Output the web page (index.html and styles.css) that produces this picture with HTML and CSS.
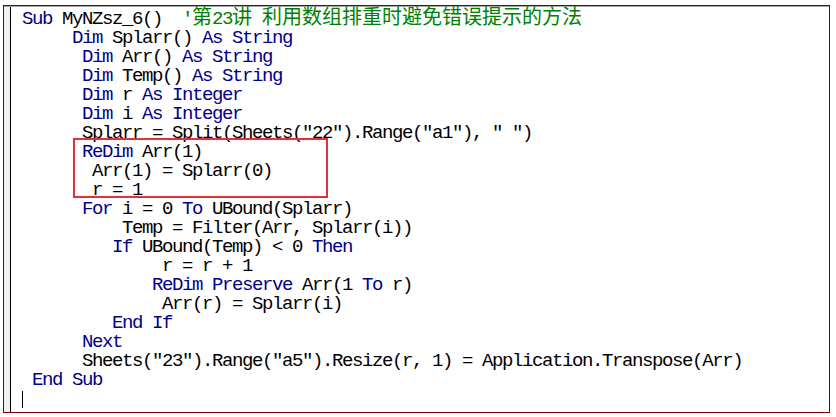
FILE: index.html
```html
<!DOCTYPE html>
<html lang="zh">
<head>
<meta charset="utf-8">
<link rel="stylesheet" href="styles.css">
</head>
<body>
<div class="frame">
  <div class="inner">
    <div class="gutter"></div>
    <div class="code">
      <div class="ln"><span class="kw">Sub</span> MyNZsz_6()  <span class="cm">'<span class="cjk">第</span>23<span class="cjk">讲</span> <span class="cjk">利用数组排重时避免错误提示的方法</span></span></div>
      <div class="ln">     <span class="kw">Dim</span> Splarr() <span class="kw">As</span> <span class="kw">String</span></div>
      <div class="ln">      <span class="kw">Dim</span> Arr() <span class="kw">As</span> <span class="kw">String</span></div>
      <div class="ln">      <span class="kw">Dim</span> Temp() <span class="kw">As</span> <span class="kw">String</span></div>
      <div class="ln">      <span class="kw">Dim</span> r <span class="kw">As</span> <span class="kw">Integer</span></div>
      <div class="ln">      <span class="kw">Dim</span> i <span class="kw">As</span> <span class="kw">Integer</span></div>
      <div class="ln">      Splarr = Split(Sheets("22").Range("a1"), " ")</div>
      <div class="ln">      <span class="kw">ReDim</span> Arr(1)</div>
      <div class="ln">       Arr(1) = Splarr(0)</div>
      <div class="ln">       r = 1</div>
      <div class="ln">      <span class="kw">For</span> i = 0 <span class="kw">To</span> UBound(Splarr)</div>
      <div class="ln">          Temp = Filter(Arr, Splarr(i))</div>
      <div class="ln">         <span class="kw">If</span> UBound(Temp) &lt; 0 <span class="kw">Then</span></div>
      <div class="ln">              r = r + 1</div>
      <div class="ln">             <span class="kw">ReDim</span> <span class="kw">Preserve</span> Arr(1 <span class="kw">To</span> r)</div>
      <div class="ln">              Arr(r) = Splarr(i)</div>
      <div class="ln">         <span class="kw">End</span> <span class="kw">If</span></div>
      <div class="ln">      <span class="kw">Next</span></div>
      <div class="ln">      Sheets("23").Range("a5").Resize(r, 1) = Application.Transpose(Arr)</div>
      <div class="ln"> <span class="kw">End</span> <span class="kw">Sub</span></div>
      <div class="ln"><span class="caret"></span></div>
      <div class="highlight"></div>
    </div>
  </div>
</div>
</body>
</html>
```

FILE: styles.css
```css
html, body {
  margin: 0;
  padding: 0;
  background: #ffffff;
}

.frame {
  box-sizing: border-box;
  margin: 5px 0 0 3px;
  width: 827px;
  height: 408px;
  border: 1px solid #800000;
  background: #ffffff;
}

.inner {
  box-sizing: border-box;
  height: 100%;
  display: flex;
  border-top: 1px solid #a8a8a8;
}

.gutter {
  width: 6px;
  flex: none;
  background: #f0f0f0;
  border-right: 1px solid #000000;
}

.code {
  position: relative;
  flex: 1;
  padding: 3px 0 0 11px;
  font-family: "Liberation Mono", "DejaVu Sans Mono", monospace;
  font-size: 19px;
  letter-spacing: -1.4px;
  color: #000000;
}

.ln {
  height: 19px;
  line-height: 19px;
  white-space: pre;
}

.kw {
  color: #00008a;
}

.cm {
  color: #008000;
}

.cjk {
  font-family: "Noto Sans CJK SC", "Noto Sans", sans-serif;
  font-size: 20px;
  letter-spacing: 0;
  line-height: 1px;
}

.caret {
  display: inline-block;
  width: 1px;
  height: 17px;
  background: #000000;
  vertical-align: -4px;
}

.highlight {
  position: absolute;
  left: 62px;
  top: 131px;
  width: 255px;
  height: 60px;
  box-sizing: border-box;
  border: 2px solid #e3303b;
}
```
